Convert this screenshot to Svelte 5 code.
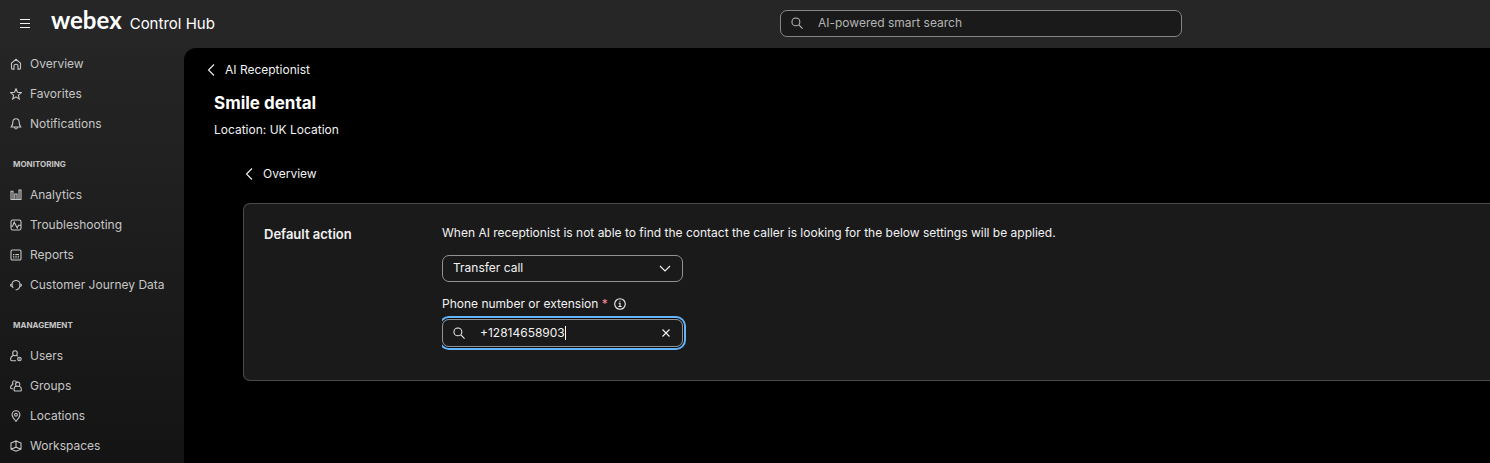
<script>
  const groups = [
    {
      title: '',
      items: [
        { label: 'Overview', icon: 'home' },
        { label: 'Favorites', icon: 'star' },
        { label: 'Notifications', icon: 'bell' }
      ]
    },
    {
      title: 'Monitoring',
      items: [
        { label: 'Analytics', icon: 'bars' },
        { label: 'Troubleshooting', icon: 'pulse' },
        { label: 'Reports', icon: 'report' },
        { label: 'Customer Journey Data', icon: 'journey' }
      ]
    },
    {
      title: 'Management',
      items: [
        { label: 'Users', icon: 'user' },
        { label: 'Groups', icon: 'group' },
        { label: 'Locations', icon: 'pin' },
        { label: 'Workspaces', icon: 'space' }
      ]
    }
  ];

  const icons = {
    home: 'M1.5 5.2 6 1.3l4.5 3.9v5.1q0 .8-.8.8H8V8q0-1.8-2-1.8T4 8v3.100H2.300q-.8 0-.8-.8Z',
    star: 'M6 .8 7.500 4.300l3.900.3-3 2.500.9 3.900L6 8.900 2.700 11l.9-3.900-3-2.500 3.900-.3Z',
    bell: 'M6 .8c-2 0-3.100 1.400-3.100 3.300 0 2.500-.6 3.300-1.700 4.900h9.600C9.700 7.400 9.100 6.600 9.100 4.100 9.100 2.200 8 .8 6 .8ZM4.500 9q.2 2 1.500 2T7.500 9',
    bars: 'M1 2.200h2v8.300H1ZM4.800 5h2.200v5.500H4.800ZM9 1h2v9.500H9ZM.5 10.500h11',
    pulse: 'M2.800 1h6.400q1.800 0 1.800 1.800v6.400q0 1.800-1.800 1.800H2.800Q1 11 1 9.200V2.800Q1 1 2.800 1ZM1 7.200h1.600L4.200 3l3 6 1.200-2.700H11',
    report: 'M2.300 1h7.400q1.300 0 1.300 1.300v7.400q0 1.300-1.300 1.300H2.300Q1 11 1 9.700V2.300Q1 1 2.300 1ZM3 5.500h1.300m1 0H9M3 7.300h1.300m1 0h1.400m1 0H9M3 9h1.300m1 0h1.400m1 0H9',
    journey: 'M2 4.600C3 .4 9 .4 10 4.600M.7 5.500q1.600-1.300 1.600.6t-1.600.6ZM11.300 5.500q-1.600-1.300-1.600.6t1.600.6ZM9.900 7c-.3 2.200-1.500 3.300-3 3.700M2.200 7.300l1 1.700M5.600 10.800h1.300',
    user: 'M5 .8a2.300 2.500 0 1 1 0 5 2.300 2.500 0 0 1 0-5ZM3.300 5.500C1.600 6 .7 7.200.6 9.300q0 1.500 1.300 1.500H6M6.700 5.600l1.100.7M9.400 7.200a1.700 1.700 0 1 1 0 3.600 1.700 1.700 0 0 1 0-3.600ZM8.700 9h1.600',
    group: 'M4.600.8a1.900 1.900 0 0 1 1.800 1.300M3.400 4.300A1.900 1.900 0 0 1 4.600.8M3.400 4.300C1.600 4.700.7 6 .6 7.700q0 1.100 1.200 1.100h1.100M7.700 2.100a2.100 2.200 0 1 1 0 4.400 2.100 2.200 0 0 1 0-4.400ZM6.200 6.100C4.700 6.600 4 8 4 9.700q0 1.300 1.200 1.300h5q1.200 0 1.200-1.300c0-1.700-.8-3.100-2.200-3.600',
    pin: 'M6 11.300C4.200 9 2.100 7 2.100 4.700a3.900 3.900 0 0 1 7.800 0C9.900 7 7.800 9 6 11.300ZM6 3.300a1.400 1.400 0 1 1 0 2.800 1.400 1.400 0 0 1 0-2.800Z',
    space: 'M1 3 6 .9 11 3v6.200L6 11.200 1 9.200ZM6 1v6.200M1 9.200l5-2 5 2'
  };

  let phone = $state('+12814658903');
  let action = $state('Transfer call');
</script>

<div class="app">
  <header>
    <button class="burger" aria-label="Menu">
      <svg width="10" height="10" viewBox="0 0 10 10"><path d="M0 1.500h10M0 5.500h10M0 9.500h10" /></svg>
    </button>
    <a class="brand" href="#home"><span class="logo">webex</span><span>Control Hub</span></a>
    <label class="search">
      <svg width="12" height="12" viewBox="0 0 13 13"><circle cx="5.300" cy="5.300" r="4.300" /><path d="m8.500 8.500 4 4" /></svg>
      <input type="search" placeholder="AI-powered smart search" aria-label="AI-powered smart search" />
    </label>
  </header>

  <nav>
    {#each groups as group}
      {#if group.title}<h2>{group.title}</h2>{/if}
      <ul>
        {#each group.items as item}
          <li>
            <a href="#{item.icon}">
              <svg width="12" height="12" viewBox="0 0 12 12"><path d={icons[item.icon]} /></svg>
              {item.label}
            </a>
          </li>
        {/each}
      </ul>
    {/each}
  </nav>

  <main>
    <a class="back" href="#receptionist">
      <svg width="8" height="12" viewBox="0 0 8 12"><path d="M7 .5 1.500 6 7 11.500" /></svg>
      AI Receptionist
    </a>
    <h1>Smile dental</h1>
    <p class="location">Location: UK Location</p>

    <section>
      <a class="back" href="#overview">
        <svg width="8" height="12" viewBox="0 0 8 12"><path d="M7 .5 1.500 6 7 11.500" /></svg>
        Overview
      </a>
      <div class="card">
        <h3>Default action</h3>
        <form>
          <p>When AI receptionist is not able to find the contact the caller is looking for the below settings will be applied.</p>
          <div class="select">
            <select bind:value={action} aria-label="Default action">
              <option>Transfer call</option>
            </select>
            <svg width="12" height="8" viewBox="0 0 12 8"><path d="m1 1 5 5 5-5" /></svg>
          </div>
          <div class="label">
            <label for="phone">Phone number or extension <span class="star">*</span></label>
            <svg width="12" height="12" viewBox="0 0 12 12"><circle cx="6" cy="6" r="5.300" /><path d="M4.700 5.200H6v3.300M4.400 8.500h3.200M5.500 3.200h1" /></svg>
          </div>
          <div class="phone">
            <svg width="12" height="12" viewBox="0 0 13 13"><circle cx="5.300" cy="5.300" r="4.300" /><path d="m8.500 8.500 4 4" /></svg>
            <input id="phone" type="text" bind:value={phone} />
            <span class="caret"></span>
            <button type="button" aria-label="Clear" onclick={() => (phone = '')}>
              <svg width="8" height="8" viewBox="0 0 8 8"><path d="m.5.5 7 7m0-7-7 7" /></svg>
            </button>
          </div>
        </form>
      </div>
    </section>
  </main>
</div>

<style>
  :global(body) {
    margin: 0;
    background: #000;
  }
  .app {
    display: grid;
    grid-template: 48px 1fr / 184px minmax(0, 1fr);
    min-height: 100vh;
    overflow: hidden;
    background: linear-gradient(#272727, #141414);
    color: #f2f2f2;
    font: 12px/20px Inter, sans-serif;
  }
  svg {
    flex: none;
    fill: none;
    stroke: currentColor;
    stroke-width: 1.1;
  }
  a {
    color: inherit;
    text-decoration: none;
  }
  button,
  input,
  select {
    margin: 0;
    border: 0;
    padding: 0;
    outline: 0;
    background: none;
    color: inherit;
    font: inherit;
  }
  h1, h2, h3, p, ul {
    margin: 0;
    padding: 0;
  }
  header {
    grid-column: 1 / -1;
    display: grid;
    grid-template-columns: 31px 1fr 402px 308px;
    align-items: center;
    padding-left: 20px;
    background: #262626;
  }
  .burger {
    display: flex;
    justify-self: start;
    margin-bottom: 2px;
  }
  .brand {
    display: flex;
    align-items: baseline;
    gap: 8px;
    color: #fff;
    font-size: 15px;
    line-height: 24px;
    padding-bottom: 4px;
  }
  .logo {
    font-family: Lato, sans-serif;
    font-size: 24px;
    font-weight: 700;
  }
  .search {
    display: flex;
    align-items: center;
    gap: 15px;
    box-sizing: border-box;
    height: 27px;
    padding: 0 10px 1px;
    margin-bottom: 1px;
    border: 1px solid #858585;
    border-radius: 7px;
    background: #1a1a1a;
    color: #bebebe;
  }
  .search input {
    flex: 1;
  }
  .search input::placeholder {
    color: #b4b4b4;
    opacity: 1;
  }
  nav {
    padding-top: 1px;
    color: #c6c6c6;
  }
  ul {
    list-style: none;
  }
  nav a {
    display: flex;
    align-items: center;
    gap: 8px;
    height: 30px;
    padding-left: 10px;
  }
  h2 {
    margin: 20px 0 11px 13px;
    font-size: 8px;
    line-height: 10px;
    font-weight: 700;
    text-transform: uppercase;
  }
  main {
    padding: 12px 0 0 30px;
    border-top-left-radius: 12px;
    background: #000;
  }
  .back {
    display: flex;
    align-items: center;
    gap: 10px;
    width: max-content;
    margin-left: -7px;
  }
  h1 {
    margin-top: 11px;
    font-size: 17px;
    line-height: 24px;
    color: #fff;
  }
  .location {
    margin-top: 5px;
  }
  section {
    margin: 24px 0 0 29px;
  }
  section .back {
    margin-left: 2px;
  }
  .card {
    display: grid;
    grid-template-columns: 178px 1fr;
    margin-top: 19px;
    padding: 19px 20px 33px;
    border: 1px solid #4a4a4a;
    border-right: 0;
    border-radius: 7px 0 0 7px;
    background: #1a1a1a;
  }
  h3 {
    font-size: 13px;
    line-height: 22px;
    font-weight: 600;
  }
  .select {
    position: relative;
    width: 241px;
    margin-top: 12px;
  }
  select {
    display: block;
    box-sizing: border-box;
    width: 100%;
    height: 27px;
    padding: 0 0 1px 10px;
    border: 1px solid #929292;
    border-radius: 7px;
    appearance: none;
  }
  option {
    background: #1a1a1a;
  }
  .select svg {
    position: absolute;
    top: 10px;
    right: 12px;
    pointer-events: none;
  }
  .label {
    display: flex;
    align-items: center;
    gap: 6px;
    margin: 12px 0 5px;
  }
  .star {
    color: #fc8b98;
  }
  .phone {
    display: flex;
    align-items: center;
    box-sizing: border-box;
    width: 241px;
    height: 28px;
    padding: 0 12px 0 10px;
    border: 1px solid #929292;
    border-radius: 7px;
    box-shadow: 0 0 0 1px #0b0b0b, 0 0 0 3px #64b4fa;
    clip-path: inset(-3px -3px -3px 0);
  }
  .phone input {
    field-sizing: content;
    margin-left: 15px;
    min-width: 2px;
    max-width: 160px;
    caret-color: transparent;
  }
  .caret {
    width: 1px;
    height: 14px;
    background: #fff;
  }
  .phone button {
    display: flex;
    margin-left: auto;
  }
</style>
